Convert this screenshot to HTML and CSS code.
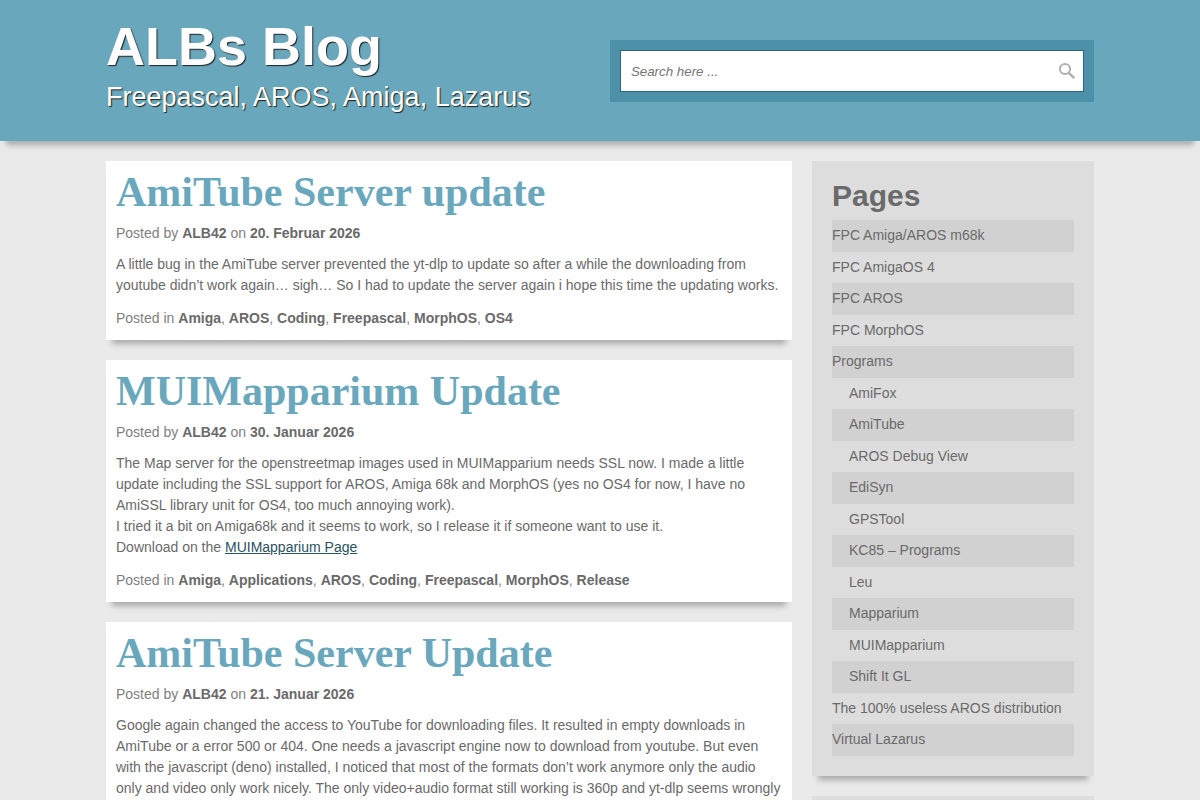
FILE: index.html
```html
<!DOCTYPE html>
<html lang="de">
<head>
  <meta charset="utf-8">
  <meta name="viewport" content="width=device-width, initial-scale=1">
  <title>ALBs Blog</title>
  <link rel="stylesheet" href="styles.css">
</head>
<body>

<header class="site-header">
  <div class="container header-inner">
    <div class="branding">
      <h1 class="site-title"><a href="#">ALBs Blog</a></h1>
      <p class="tagline">Freepascal, AROS, Amiga, Lazarus</p>
    </div>
    <form class="search-form" role="search">
      <div class="search-box">
        <input type="search" class="search-field" placeholder="Search here ..." aria-label="Search">
        <button type="submit" class="search-submit" aria-label="Search">
          <svg width="18" height="18" viewBox="0 0 18 18" fill="none" stroke="#b0b0b0" aria-hidden="true">
            <circle cx="7" cy="7" r="5.1" stroke-width="2"/>
            <path d="M10.6 10.6L16.2 16.2" stroke-width="2.4"/>
          </svg>
        </button>
      </div>
    </form>
  </div>
</header>

<div class="container columns">

  <main class="content">
    <article class="post">
      <h2 class="post-title"><a href="#">AmiTube Server update</a></h2>
      <p class="meta">Posted by <a href="#">ALB42</a> on <a href="#">20. Februar 2026</a></p>
      <p class="post-text">A little bug in the AmiTube server prevented the yt-dlp to update so after a while the downloading from youtube didn’t work again… sigh… So I had to update the server again i hope this time the updating works.</p>
      <p class="meta">Posted in <a href="#">Amiga</a>, <a href="#">AROS</a>, <a href="#">Coding</a>, <a href="#">Freepascal</a>, <a href="#">MorphOS</a>, <a href="#">OS4</a></p>
    </article>

    <article class="post">
      <h2 class="post-title"><a href="#">MUIMapparium Update</a></h2>
      <p class="meta">Posted by <a href="#">ALB42</a> on <a href="#">30. Januar 2026</a></p>
      <p class="post-text">The Map server for the openstreetmap images used in MUIMapparium needs SSL now. I made a little update including the SSL support for AROS, Amiga 68k and MorphOS (yes no OS4 for now, I have no AmiSSL library unit for OS4, too much annoying work).<br>
      I tried it a bit on Amiga68k and it seems to work, so I release it if someone want to use it.<br>
      Download on the <a href="#">MUIMapparium Page</a></p>
      <p class="meta">Posted in <a href="#">Amiga</a>, <a href="#">Applications</a>, <a href="#">AROS</a>, <a href="#">Coding</a>, <a href="#">Freepascal</a>, <a href="#">MorphOS</a>, <a href="#">Release</a></p>
    </article>

    <article class="post">
      <h2 class="post-title"><a href="#">AmiTube Server Update</a></h2>
      <p class="meta">Posted by <a href="#">ALB42</a> on <a href="#">21. Januar 2026</a></p>
      <p class="post-text">Google again changed the access to YouTube for downloading files. It resulted in empty downloads in AmiTube or a error 500 or 404. One needs a javascript engine now to download from youtube. But even with the javascript (deno) installed, I noticed that most of the formats don’t work anymore only the audio only and video only work nicely. The only video+audio format still working is 360p and yt-dlp seems wrongly</p>
    </article>
  </main>

  <aside class="sidebar">
    <nav class="widget">
      <h3 class="widget-title">Pages</h3>
      <ul class="pages">
        <li><a href="#">FPC Amiga/AROS m68k</a></li>
        <li><a href="#">FPC AmigaOS 4</a></li>
        <li><a href="#">FPC AROS</a></li>
        <li><a href="#">FPC MorphOS</a></li>
        <li><a href="#">Programs</a>
          <ul class="children">
            <li><a href="#">AmiFox</a></li>
            <li><a href="#">AmiTube</a></li>
            <li><a href="#">AROS Debug View</a></li>
            <li><a href="#">EdiSyn</a></li>
            <li><a href="#">GPSTool</a></li>
            <li><a href="#">KC85 – Programs</a></li>
            <li><a href="#">Leu</a></li>
            <li><a href="#">Mapparium</a></li>
            <li><a href="#">MUIMapparium</a></li>
            <li><a href="#">Shift It GL</a></li>
          </ul>
        </li>
        <li><a href="#">The 100% useless AROS distribution</a></li>
        <li><a href="#">Virtual Lazarus</a></li>
      </ul>
    </nav>
    <section class="widget"></section>
  </aside>

</div>

</body>
</html>
```

FILE: styles.css
```css
* {
  box-sizing: border-box;
}

body {
  margin: 0;
  background: #eaeaea;
  color: #6a6a6a;
  font-family: "Liberation Sans", Arial, sans-serif;
  font-size: 14px;
  line-height: 21px;
}

h1, h2, h3, p, ul {
  margin: 0;
  padding: 0;
}

ul {
  list-style: none;
}

a {
  color: inherit;
  text-decoration: none;
}

.container {
  width: 90%;
  max-width: 988px;
  margin: 0 auto;
}

/* header */
.site-header {
  background: #69a7bc;
  box-shadow: 0 10px 6px -6px #aaa;
}

.header-inner {
  display: flex;
  justify-content: space-between;
  align-items: flex-start;
  padding: 20px 0 26px;
}

.branding {
  color: #fff;
  text-shadow: 1px 1px 1px #222;
}

.site-title {
  font-size: 54px;
  line-height: 52px;
}

.tagline {
  margin-top: 7px;
  font-size: 27px;
  line-height: 36px;
}

.search-form {
  width: 49%;
  margin-top: 20px;
  padding: 10px;
  background: #4d91a8;
}

.search-box {
  display: flex;
  align-items: center;
  height: 42px;
  padding: 0 7px 0 10px;
  background: #fff;
  border: 1px solid #2f657a;
}

.search-field {
  flex: 1;
  min-width: 0;
  padding: 0;
  border: 0;
  outline: 0;
  background: none;
  appearance: none;
  color: #666;
  font-family: inherit;
  font-style: italic;
}

.search-field::placeholder {
  color: #757575;
}

.search-submit {
  display: flex;
  padding: 0;
  border: 0;
  background: none;
  cursor: pointer;
}

/* columns */
.columns {
  display: flex;
  align-items: flex-start;
  gap: 20px;
  padding: 20px 0;
}

.content {
  flex: 1;
  min-width: 0;
}

.sidebar {
  width: 282px;
}

.post,
.widget {
  margin-bottom: 20px;
  box-shadow: 0 10px 6px -6px #aaa;
}

/* posts */
.post {
  padding: 10px 10px 11px;
  background: #fff;
}

.post-title {
  color: #69a7bc;
  font-family: "Liberation Serif", "Times New Roman", serif;
  font-size: 42px;
  line-height: 42px;
  margin-bottom: 10px;
}

.meta {
  color: #808080;
}

.meta a {
  color: #6a6a6a;
  font-weight: bold;
}

.post-text {
  margin: 10px 0 12px;
}

.post-text a {
  color: #2b5260;
  text-decoration: underline;
}

/* sidebar */
.widget {
  padding: 20px;
  background: #ddd;
}

.widget-title {
  font-size: 30px;
  line-height: 30px;
  margin-bottom: 9px;
}

.pages a {
  display: block;
  padding: 5px 0;
}

.pages > li:nth-child(odd) > a,
.children > li:nth-child(even) > a {
  padding-bottom: 6px;
  background: #d1d1d1;
}

.children a {
  padding-left: 17px;
}
```
